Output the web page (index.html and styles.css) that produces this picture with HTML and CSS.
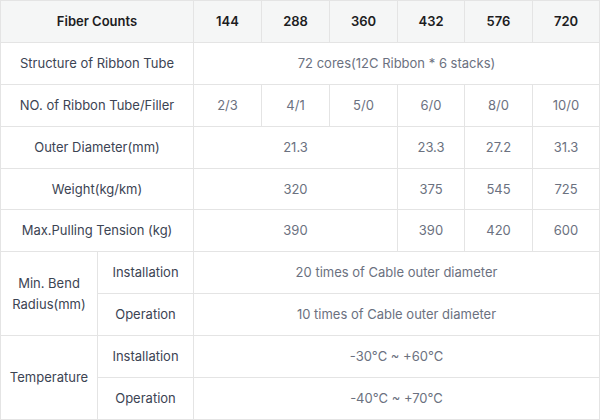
FILE: index.html
```html
<!DOCTYPE html>
<html>
<head>
<meta charset="utf-8">
<link rel="stylesheet" href="styles.css">
</head>
<body>
<table class="spec">
  <colgroup>
    <col class="c-a"><col class="c-b">
    <col class="c-n"><col class="c-n"><col class="c-n"><col class="c-m"><col class="c-n"><col class="c-m">
  </colgroup>
  <thead>
    <tr>
      <th colspan="2">Fiber Counts</th>
      <th>144</th><th>288</th><th>360</th><th>432</th><th>576</th><th>720</th>
    </tr>
  </thead>
  <tbody>
    <tr>
      <td colspan="2" class="label">Structure of Ribbon Tube</td>
      <td colspan="6" class="val">72 cores(12C Ribbon * 6 stacks)</td>
    </tr>
    <tr>
      <td colspan="2" class="label">NO. of Ribbon Tube/Filler</td>
      <td class="val">2/3</td><td class="val">4/1</td><td class="val">5/0</td><td class="val">6/0</td><td class="val">8/0</td><td class="val">10/0</td>
    </tr>
    <tr>
      <td colspan="2" class="label">Outer Diameter(mm)</td>
      <td colspan="3" class="val">21.3</td><td class="val">23.3</td><td class="val">27.2</td><td class="val">31.3</td>
    </tr>
    <tr>
      <td colspan="2" class="label">Weight(kg/km)</td>
      <td colspan="3" class="val">320</td><td class="val">375</td><td class="val">545</td><td class="val">725</td>
    </tr>
    <tr>
      <td colspan="2" class="label">Max.Pulling Tension (kg)</td>
      <td colspan="3" class="val">390</td><td class="val">390</td><td class="val">420</td><td class="val">600</td>
    </tr>
    <tr>
      <td rowspan="2" class="label">Min. Bend<br>Radius(mm)</td>
      <td class="label">Installation</td>
      <td colspan="6" class="val">20 times of Cable outer diameter</td>
    </tr>
    <tr>
      <td class="label">Operation</td>
      <td colspan="6" class="val">10 times of Cable outer diameter</td>
    </tr>
    <tr>
      <td rowspan="2" class="label">Temperature</td>
      <td class="label">Installation</td>
      <td colspan="6" class="val">-30°C ~ +60°C</td>
    </tr>
    <tr>
      <td class="label">Operation</td>
      <td colspan="6" class="val">-40°C ~ +70°C</td>
    </tr>
  </tbody>
</table>
</body>
</html>
```
FILE: styles.css
```css
html, body {
  margin: 0;
  padding: 0;
  background: #ffffff;
}

.spec {
  width: 600px;
  table-layout: fixed;
  border-collapse: collapse;
  font-family: Inter, "Liberation Sans", sans-serif;
  font-size: 13px;
}

.c-a { width: 97px; }
.c-b { width: 96px; }
.c-n { width: 68px; }
.c-m { width: 67px; }

.spec th,
.spec td {
  border: 1px solid #e4e4e4;
  text-align: center;
  vertical-align: middle;
  padding: 0 4px;
  height: 40.9px;
  line-height: 21px;
}

.spec th {
  background: #f5f6f6;
  color: #1d1d1f;
  font-weight: 600;
}

.label {
  color: #3c4453;
}

.val {
  color: #6b7180;
}
```
